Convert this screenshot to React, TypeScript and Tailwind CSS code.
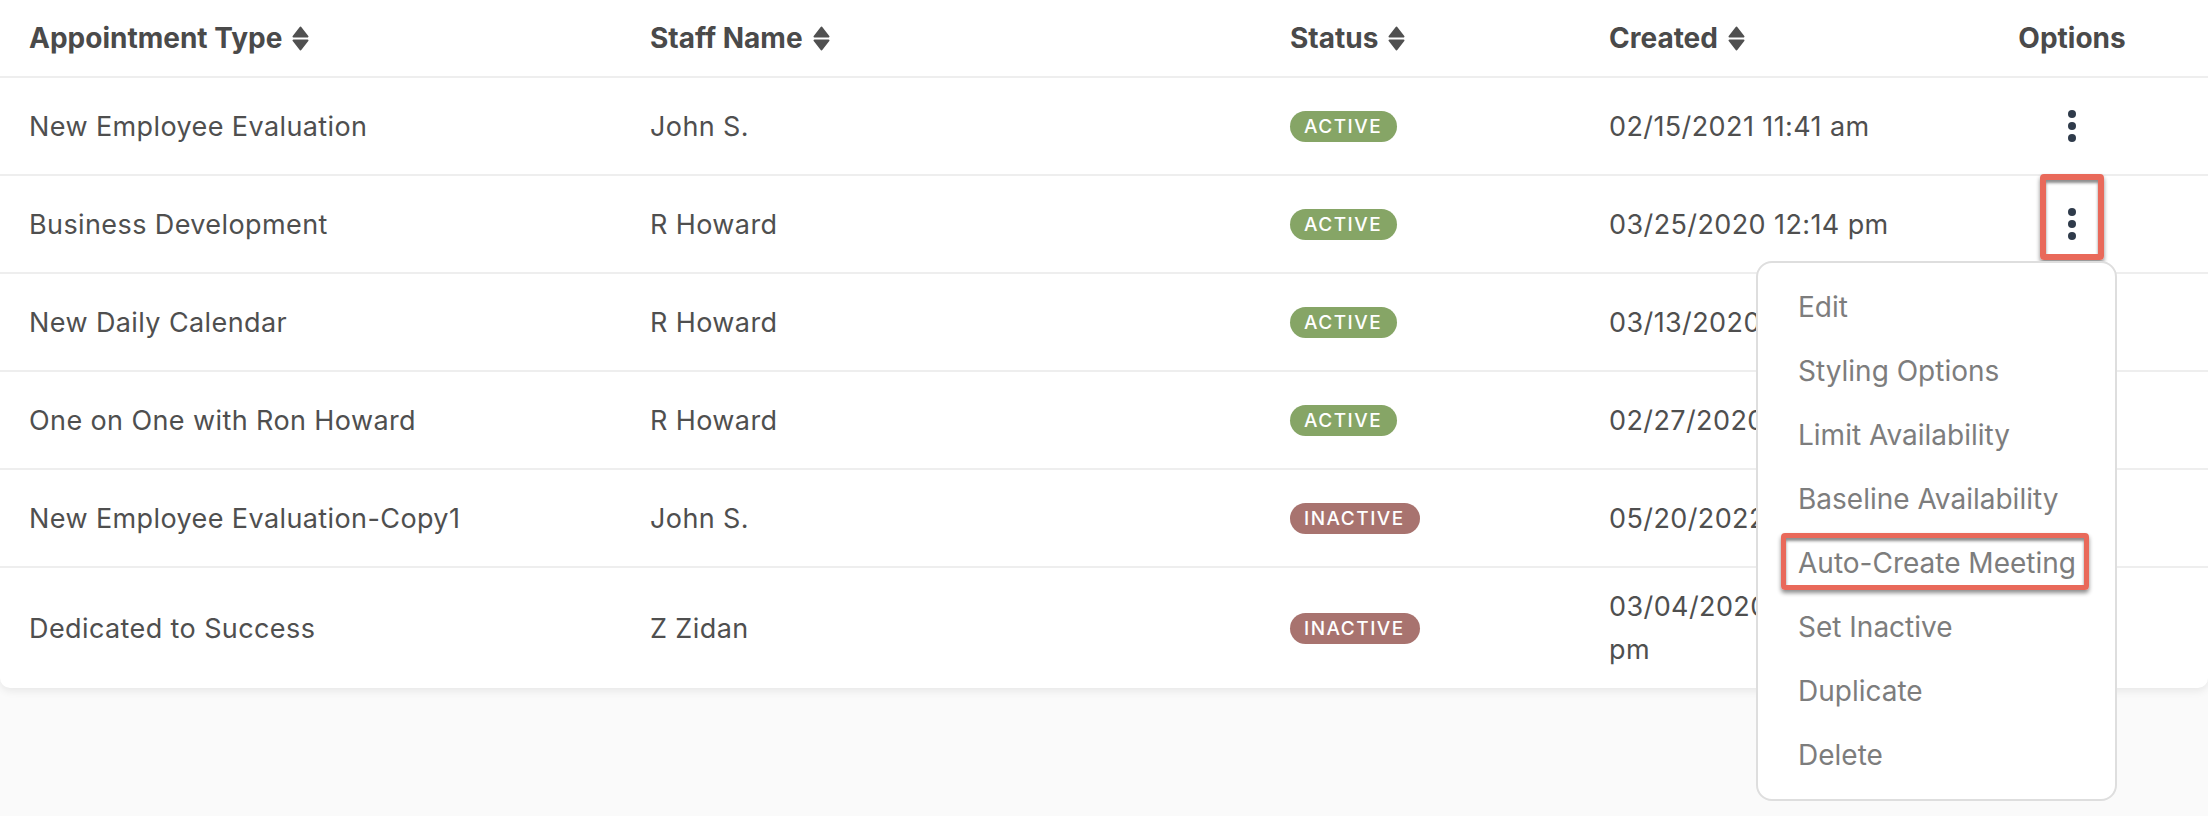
const rows = [
  { type: "New Employee Evaluation", staff: "John S.", active: true, created: ["02/15/2021 11:41 am"] },
  { type: "Business Development", staff: "R Howard", active: true, created: ["03/25/2020 12:14 pm"] },
  { type: "New Daily Calendar", staff: "R Howard", active: true, created: ["03/13/2020 09:32 am"] },
  { type: "One on One with Ron Howard", staff: "R Howard", active: true, created: ["02/27/2020 10:05 am"] },
  { type: "New Employee Evaluation-Copy1", staff: "John S.", active: false, created: ["05/20/2022 03:18 pm"] },
  { type: "Dedicated to Success", staff: "Z Zidan", active: false, created: ["03/04/2020 11:08", "pm"] },
];

const menuItems = [
  "Edit",
  "Styling Options",
  "Limit Availability",
  "Baseline Availability",
  "Auto-Create Meeting",
  "Set Inactive",
  "Duplicate",
  "Delete",
];

function SortIcon() {
  return (
    <svg width="17" height="25" viewBox="0 0 17 25" className="shrink-0">
      <path d="M8.5 1.5 L15.5 10.5 L1.5 10.5 Z" fill="#505050" stroke="#505050" strokeWidth="2" strokeLinejoin="round" />
      <path d="M1.5 14.5 L15.5 14.5 L8.5 23.5 Z" fill="#505050" stroke="#505050" strokeWidth="2" strokeLinejoin="round" />
    </svg>
  );
}

function Dots() {
  return (
    <div className="flex flex-col items-center gap-[4px]">
      <span className="w-[8px] h-[8px] rounded-full bg-[#2f3b4b]" />
      <span className="w-[8px] h-[8px] rounded-full bg-[#2f3b4b]" />
      <span className="w-[8px] h-[8px] rounded-full bg-[#2f3b4b]" />
    </div>
  );
}

function Badge({ active }: { active: boolean }) {
  return (
    <span
      className={
        "inline-flex items-center h-[31px] pl-[14px] pr-[15px] rounded-full text-white text-[19px] font-medium tracking-[1.5px] leading-none " +
        (active ? "bg-[#86a566]" : "bg-[#a8736f]")
      }
    >
      {active ? "ACTIVE" : "INACTIVE"}
    </span>
  );
}

const grid = "grid grid-cols-[621px_640px_319px_356px_1fr]";
const redBox =
  "absolute border-[#e9695a] rounded-[4px] shadow-[0_3px_4px_rgba(0,0,0,0.45),inset_0_3px_3px_rgba(0,0,0,0.45)]";

export default function App() {
  return (
    <div className="min-h-[816px] bg-[#fafafa] font-['Inter',sans-serif]">
      <div className="relative bg-white rounded-b-[10px] shadow-[0_3px_8px_rgba(0,0,0,0.08)]">
        <div className={grid + " h-[78px] items-center border-b-2 border-[#eeeeee] text-[28px] font-bold text-[#4a4a4a]"}>
          {["Appointment Type", "Staff Name", "Status", "Created"].map((h) => (
            <div key={h} className="px-[29px] flex items-center gap-[10px]">
              <span>{h}</span>
              <SortIcon />
            </div>
          ))}
          <div className="text-center">Options</div>
        </div>

        {rows.map((r, i) => (
          <div
            key={i}
            className={
              grid +
              " relative min-h-[98px] items-center py-[17px] text-[27px] tracking-[0.4px] leading-[43px] text-[#4f4f4f] " +
              (i < rows.length - 1 ? "border-b-2 border-[#eeeeee]" : "")
            }
          >
            <div className="px-[29px]">{r.type}</div>
            <div className="px-[29px]">{r.staff}</div>
            <div className="px-[29px] flex">
              <Badge active={r.active} />
            </div>
            <div className="px-[29px]">
              {r.created.map((c) => (
                <div key={c}>{c}</div>
              ))}
            </div>
            <div className="flex justify-center">
              <Dots />
            </div>
            {i === 1 && <div className={redBox + " left-[2040px] top-[-2px] w-[64px] h-[86px] border-[6px]"} />}
          </div>
        ))}

        <div className="absolute left-[1756px] top-[261px] w-[361px] bg-white border-2 border-[#dedede] rounded-[16px] py-3">
          {menuItems.map((m) => (
            <div key={m} className="relative h-[64px] flex items-center pl-[40px] text-[28px] text-[#7d7d7d]">
              {m}
              {m === "Auto-Create Meeting" && (
                <div className={redBox + " left-[23px] top-[2px] w-[308px] h-[57px] border-[5px]"} />
              )}
            </div>
          ))}
        </div>
      </div>
    </div>
  );
}
